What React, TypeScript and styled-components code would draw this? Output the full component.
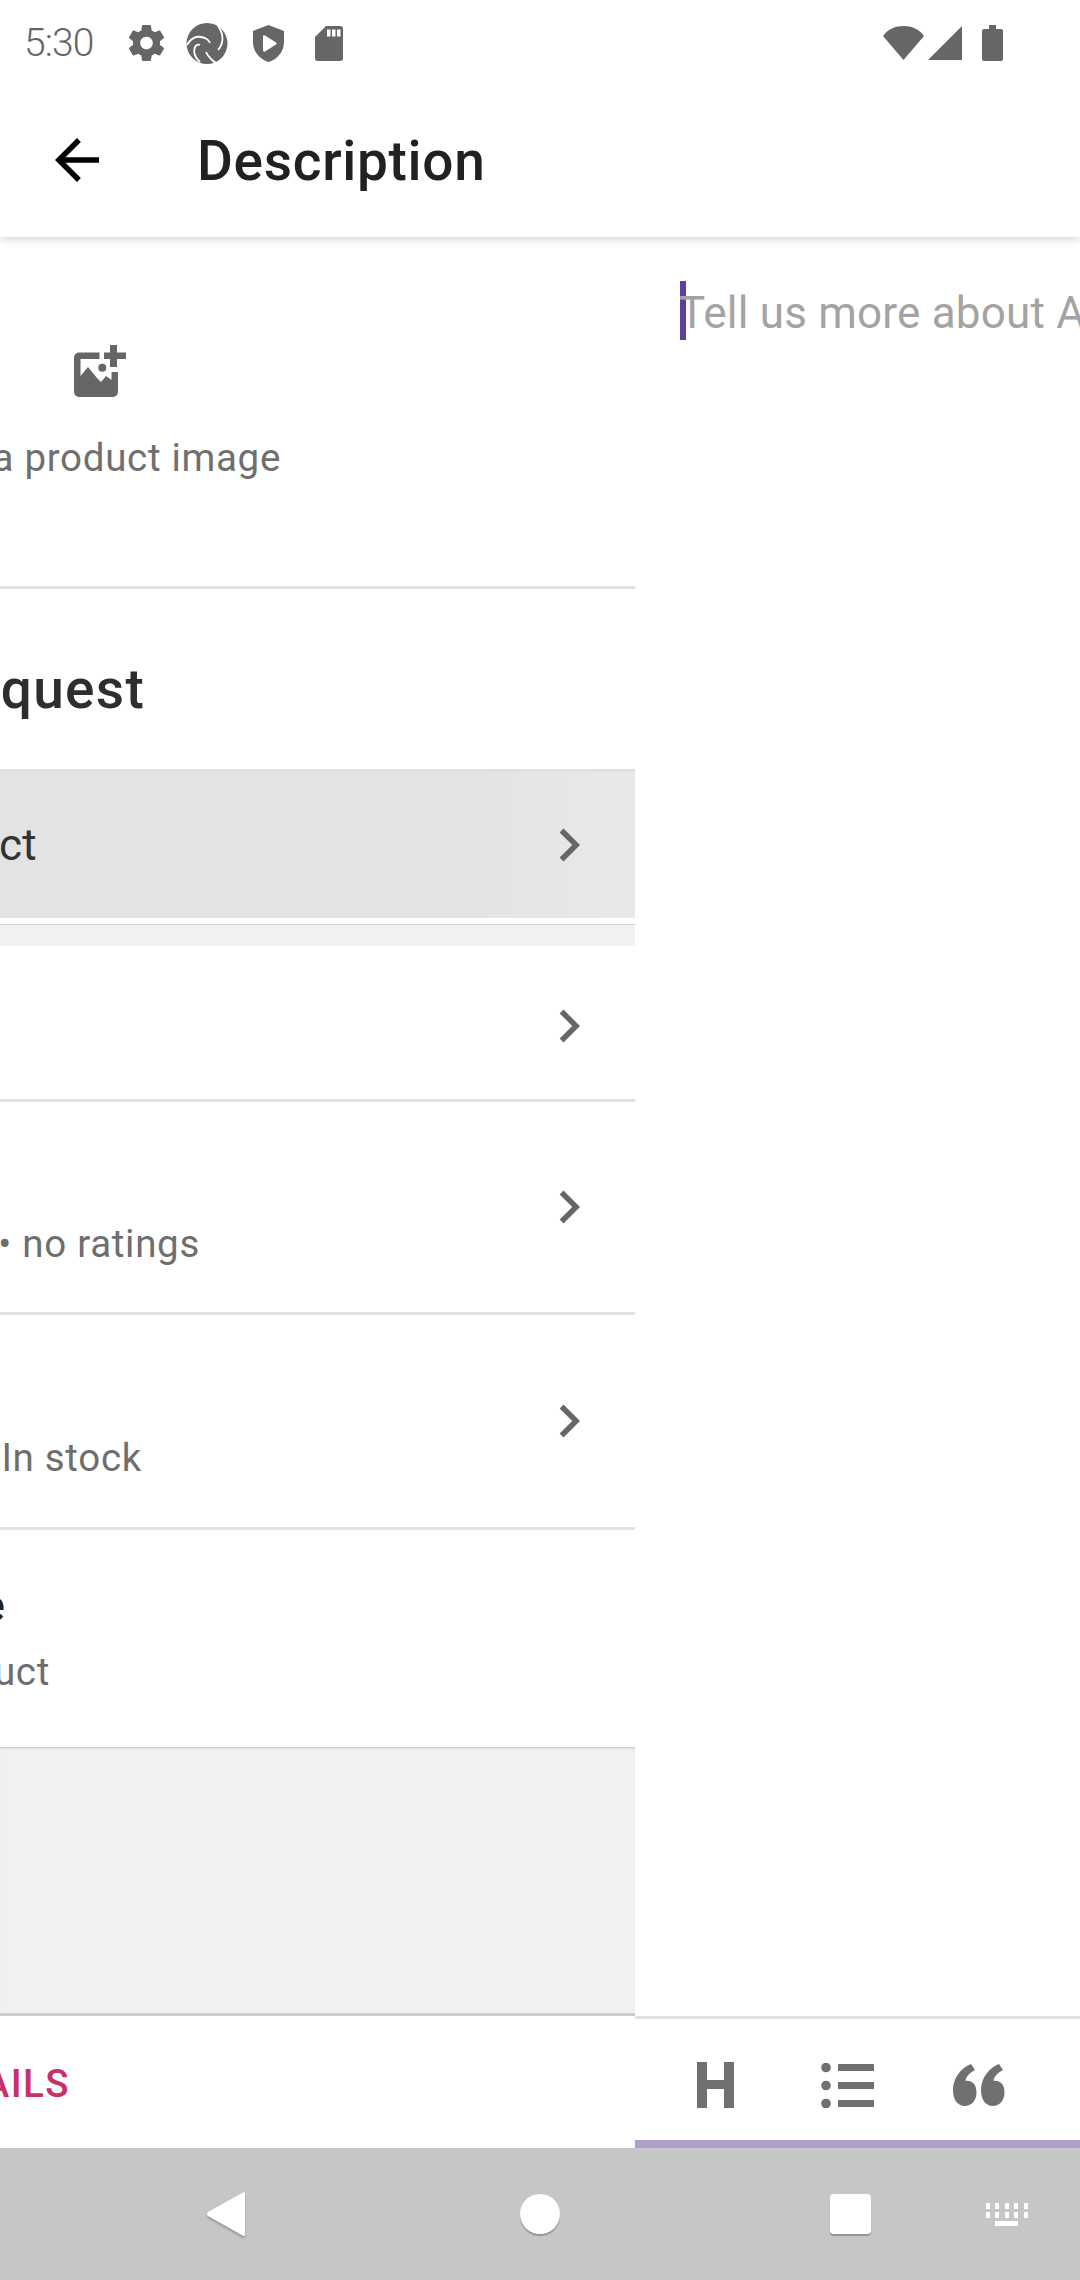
import React from "react";
import styled, { createGlobalStyle } from "styled-components";

const GlobalStyle = createGlobalStyle`
  html, body {
    margin: 0;
    padding: 0;
    background: #ffffff;
    font-family: Roboto, "Noto Sans", sans-serif;
  }
  * {
    box-sizing: border-box;
  }
`;

const Screen = styled.div`
  width: 1080px;
  height: 2280px;
  display: flex;
  flex-direction: column;
  overflow: hidden;
  background: #ffffff;
`;

////////status bar
const StatusBar = styled.div`
  height: 83px;
  flex: none;
  padding: 3px 77px 0 24px;
  display: flex;
  align-items: center;
  color: #666666;
`;
const Time = styled.span`
  width: 105px;
  flex: none;
  font-size: 39px;
  font-weight: 300;
  letter-spacing: -0.9px;
`;
const StatusIcon = styled.svg<{ $left?: number }>`
  display: block;
  flex: none;
  margin-left: ${(p) => p.$left ?? 0}px;
  fill: #666666;
`;
const Spacer = styled.div`
  flex: 1;
`;

////////toolbar
const Toolbar = styled.header`
  height: 154px;
  flex: none;
  display: flex;
  align-items: center;
  padding-left: 44px;
  background: #ffffff;
  position: relative;
  z-index: 2;
  box-shadow: 0 2px 8px rgba(0, 0, 0, 0.18);
  clip-path: inset(0 0 -20px 0);
`;
const BackIcon = styled.svg`
  width: 66px;
  height: 66px;
  fill: #000000;
  flex: none;
`;
const Title = styled.h1`
  margin: 2px 0 0 87px;
  font-size: 55px;
  font-weight: 500;
  letter-spacing: 0.69px;
  color: #212121;
`;

const Split = styled.main`
  flex: 1;
  min-height: 0;
  display: flex;
`;

////////left screen, half way out of the window
const LeftPane = styled.section`
  width: 635px;
  flex: none;
  display: flex;
  flex-direction: column;
  overflow: hidden;
  background: #f1f1f1;
`;
// text fragments keep their right edge where the sliding screen left them
const Clipped = styled.div<{ $end: number }>`
  width: ${(p) => p.$end}px;
  display: flex;
  justify-content: flex-end;
  white-space: nowrap;
`;
const ImageBoxWrap = styled.div`
  flex: none;
  background: #ffffff;
  border-bottom: 3px solid #e1e1e1;
`;
const ImageBox = styled.div`
  height: 349px;
  padding-top: 102px;
`;
const AddImageIcon = styled.svg`
  display: block;
  width: 66px;
  height: 66px;
  margin-left: 65px;
  fill: #666666;
`;
const AddImageText = styled(Clipped)`
  margin-top: 28px;
  font-size: 38.5px;
  line-height: 50px;
  letter-spacing: 0.69px;
  color: #6f6f6f;
`;
const Header = styled.div`
  height: 183px;
  flex: none;
  padding-top: 68px;
  background: #ffffff;
  border-bottom: 3px solid #e1e1e1;
`;
const HeaderText = styled(Clipped)`
  font-size: 55px;
  line-height: 64px;
  font-weight: 500;
  letter-spacing: 1.3px;
  color: #2e2e2e;
`;
const Row = styled.div<{ $height: number; $pressed?: boolean; $line?: boolean; $top?: number }>`
  height: ${(p) => p.$height}px;
  flex: none;
  display: flex;
  align-items: center;
  justify-content: space-between;
  padding-right: 33px;
  padding-top: ${(p) => p.$top ?? 0}px;
  background: ${(p) =>
    p.$pressed
      ? "linear-gradient(90deg, #e3e3e3 0%, #e3e3e3 70%, #e9e9e9 100%)"
      : "#ffffff"};
  border-bottom: ${(p) => (p.$line ? "3px solid #e1e1e1" : "none")};
`;
const RowText = styled.div<{ $top: number }>`
  align-self: flex-start;
  padding-top: ${(p) => p.$top}px;
`;
const RowTitle = styled(Clipped)`
  font-size: 44px;
  line-height: 60px;
  letter-spacing: 0.3px;
  color: #333333;
`;
const RowTitleStrong = styled(RowTitle)`
  font-weight: 500;
  color: #212121;
`;
const RowSub = styled(Clipped)`
  font-size: 38.5px;
  line-height: 62px;
  letter-spacing: 0.7px;
  color: #6e6e6e;
`;
const RowSubLow = styled(RowSub)`
  margin-top: 5px;
`;
const ChevronIcon = styled.svg`
  width: 66px;
  height: 66px;
  fill: #666666;
  flex: none;
  margin-left: auto;
`;
const Gap = styled.div`
  height: 22px;
  flex: none;
  background: #f1f1f1;
  border-top: 1px solid #cfcfcf;
`;
const WhiteStrip = styled.div`
  height: 6px;
  flex: none;
  background: #ffffff;
`;
const Filler = styled.div`
  flex: 1;
  box-shadow: inset 0 3px 3px -2px rgba(0, 0, 0, 0.2);
`;
const Footer = styled.div`
  height: 135px;
  flex: none;
  padding-top: 42px;
  background: #ffffff;
  border-top: 3px solid #cccccc;
`;
const FooterAction = styled(Clipped)`
  font-size: 38.5px;
  line-height: 52px;
  font-weight: 500;
  letter-spacing: 1.4px;
  color: #c8306b;
`;

////////right screen, the editor
const RightPane = styled.section`
  flex: 1;
  min-width: 0;
  display: flex;
  flex-direction: column;
  background: #ffffff;
`;
const Editor = styled.div`
  flex: 1;
  padding: 44px 0 0 45px;
  display: flex;
  align-items: flex-start;
  overflow: hidden;
`;
const Cursor = styled.div`
  width: 6px;
  height: 59px;
  flex: none;
  background: #5e3f95;
`;
const Placeholder = styled.div`
  font-size: 44px;
  line-height: 59px;
  margin: 3px 0 0 -7px;
  letter-spacing: 0.2px;
  color: #a3a3a3;
  white-space: nowrap;
`;
const FormatBar = styled.div`
  height: 132px;
  flex: none;
  display: flex;
  align-items: center;
  padding-left: 14px;
  border-top: 3px solid #e1e1e1;
  border-bottom: 8px solid #af9fcb;
`;
const FormatButton = styled.button`
  width: 132px;
  height: 100%;
  padding: 11px 0 0;
  border: none;
  background: transparent;
  display: flex;
  align-items: center;
  justify-content: center;
`;
const FormatIcon = styled.svg`
  display: block;
  fill: #707070;
`;

////////android nav bar
const NavBar = styled.nav`
  height: 132px;
  flex: none;
  display: flex;
  align-items: center;
  padding-left: 207px;
  background: #c6c6c6;
`;
const NavBack = styled.svg`
  width: 38px;
  height: 46px;
  flex: none;
  fill: #ffffff;
  filter: drop-shadow(0 2px 1px rgba(0, 0, 0, 0.25));
`;
const NavHome = styled.div`
  width: 40px;
  height: 40px;
  flex: none;
  margin-left: 275px;
  border-radius: 50%;
  background: #ffffff;
  box-shadow: 0 2px 1px rgba(0, 0, 0, 0.25);
`;
const NavRecent = styled.div`
  width: 41px;
  height: 40px;
  flex: none;
  margin-left: 270px;
  border-radius: 4px;
  background: #ffffff;
  box-shadow: 0 2px 1px rgba(0, 0, 0, 0.25);
`;
const NavKeyboard = styled.svg`
  width: 42px;
  height: 23px;
  flex: none;
  margin-left: 115px;
  fill: #ffffff;
`;

const CHEVRON = "M10 6 8.59 7.41 13.17 12l-4.58 4.59L10 18l6-6z";

const Chevron = () => (
  <ChevronIcon viewBox="0 0 24 24">
    <path d={CHEVRON} />
  </ChevronIcon>
);

const App = () => {
  return (
    <Screen>
      <GlobalStyle />
      <StatusBar>
        <Time>5:30</Time>
        <StatusIcon width="35" height="36" viewBox="2.4 2 19.2 20">
          <path d="M19.43 12.98c.04-.32.07-.64.07-.98s-.03-.66-.07-.98l2.11-1.65c.19-.15.24-.42.12-.64l-2-3.46c-.12-.22-.39-.3-.61-.22l-2.49 1c-.52-.4-1.08-.73-1.69-.98l-.38-2.65C14.46 2.18 14.25 2 14 2h-4c-.25 0-.46.18-.49.42l-.38 2.65c-.61.25-1.17.59-1.69.98l-2.49-1c-.23-.09-.49 0-.61.22l-2 3.46c-.13.22-.07.49.12.64l2.11 1.65c-.04.32-.07.65-.07.98s.03.66.07.98l-2.11 1.65c-.19.15-.24.42-.12.64l2 3.46c.12.22.39.3.61.22l2.49-1c.52.4 1.08.73 1.69.98l.38 2.65c.03.24.24.42.49.42h4c.25 0 .46-.18.49-.42l.38-2.65c.61-.25 1.17-.59 1.69-.98l2.49 1c.23.09.49 0 .61-.22l2-3.46c.12-.22.07-.49-.12-.64l-2.11-1.65zM12 15.5c-1.93 0-3.5-1.57-3.5-3.5s1.57-3.5 3.5-3.5 3.5 1.57 3.5 3.5-1.57 3.5-3.5 3.5z" />
        </StatusIcon>
        <StatusIcon $left={22} width="42" height="41" viewBox="0 0 42 41">
          <circle cx="21" cy="20.5" r="20.5" />
          <path
            d="M32 3c6 8 6 17 0 24M1 22c4-7 9-9 14-8 4 .5 8 3 9 6M14 39c-5-4-7-10-5-15 1-2 3-3 5-2M20 29c2 5 8 11 16 14"
            fill="none"
            stroke="#ffffff"
            strokeWidth="1.8"
          />
        </StatusIcon>
        <StatusIcon $left={25} width="31" height="37" viewBox="0 0 31 37">
          <path d="M15.5 0 31 6v11c0 9-6 17-15.5 20C6 34 0 26 0 17V6z" />
          <path d="M10 11.500c0-1 1-1.500 2-1l11 7c.8.5.8 1.500 0 2l-11 7c-1 .5-2 0-2-1z" fill="#ffffff" />
        </StatusIcon>
        <StatusIcon $left={31} width="28" height="35" viewBox="0 0 28 35">
          <path d="M11 0h14a3 3 0 0 1 3 3v29a3 3 0 0 1-3 3H3a3 3 0 0 1-3-3V11z" />
          <path d="M12 3.500h3.500v7H12zM17 3.500h3.500v7H17zM22 3.500h3.500v7H22z" fill="#ffffff" />
        </StatusIcon>
        <Spacer />
        <StatusIcon width="41" height="34" viewBox="0 0 41 34">
          <path d="M0 10C5 3 12 0 20.500 0S36 3 41 10L20.500 34z" />
        </StatusIcon>
        <StatusIcon $left={4} width="34" height="34" viewBox="0 0 34 34">
          <path d="M34 0v34H0z" />
        </StatusIcon>
        <StatusIcon $left={20} width="21" height="36" viewBox="0 0 21 36">
          <path d="M7 0h7v4h5a2 2 0 0 1 2 2v28a2 2 0 0 1-2 2H2a2 2 0 0 1-2-2V6a2 2 0 0 1 2-2h5z" />
        </StatusIcon>
      </StatusBar>

      <Toolbar>
        <BackIcon viewBox="0 0 24 24">
          <path d="M20 11H7.830l5.590-5.590L12 4l-8 8 8 8 1.410-1.410L7.830 13H20v-2z" />
        </BackIcon>
        <Title>Description</Title>
      </Toolbar>

      <Split>
        <LeftPane>
          <ImageBoxWrap>
            <ImageBox>
              <AddImageIcon viewBox="5 4 66 66">
                <path d="M19 17.500h20.500V24H20.500v17L28 32l9 11 4 4 5-6 5.500 4v-8H58v20a5 5 0 0 1-5 5H19a5 5 0 0 1-5-5V22.500a5 5 0 0 1 5-5z" />
                <circle cx="42.300" cy="32.700" r="4" />
                <path d="M50 10h7v7.500h9V24h-9v8h-7v-8h-6v-6.500h6z" />
              </AddImageIcon>
              <AddImageText $end={281}>a product image</AddImageText>
            </ImageBox>
          </ImageBoxWrap>

          <Header>
            <HeaderText $end={145}>quest</HeaderText>
          </Header>

          <Row $height={146} $pressed>
            <RowTitle $end={37}>ct</RowTitle>
            <Chevron />
          </Row>
          <WhiteStrip />
          <Gap />

          <Row $height={156} $line $top={6}>
            <Chevron />
          </Row>
          <Row $height={213} $line>
            <RowText $top={111}>
              <RowSub $end={200}>• no ratings</RowSub>
            </RowText>
            <Chevron />
          </Row>
          <Row $height={215} $line>
            <RowText $top={112}>
              <RowSub $end={142}>In stock</RowSub>
            </RowText>
            <Chevron />
          </Row>
          <Row $height={217}>
            <RowText $top={46}>
              <RowTitleStrong $end={5}>e</RowTitleStrong>
              <RowSubLow $end={50}>uct</RowSubLow>
            </RowText>
          </Row>

          <Filler />

          <Footer>
            <FooterAction $end={70}>AILS</FooterAction>
          </Footer>
        </LeftPane>

        <RightPane>
          <Editor>
            <Cursor />
            <Placeholder>Tell us more about A</Placeholder>
          </Editor>
          <FormatBar>
            <FormatButton>
              <FormatIcon width="37" height="46" viewBox="0 0 37 46">
                <path d="M0 0h10v18h17V0h10v46H27V27H10v19H0z" />
              </FormatIcon>
            </FormatButton>
            <FormatButton>
              <FormatIcon width="53" height="45" viewBox="0 0 53 45">
                <circle cx="5" cy="4.500" r="4.800" />
                <circle cx="5" cy="22.500" r="4.800" />
                <circle cx="5" cy="40.500" r="4.800" />
                <path d="M17 1h36v7H17zM17 19h36v7H17zM17 37h36v7H17z" />
              </FormatIcon>
            </FormatButton>
            <FormatButton>
              <FormatIcon width="52" height="42" viewBox="0 0 52 42">
                <path d="M18 0l4 6C16 9 13 13 12.500 17c6-1 11 3 11 11.500C23.500 37 18 42 12 42 4 42 0 35 0 26 0 14 8 4 18 0z" />
                <path d="M46 0l4 6C44 9 41 13 40.500 17c6-1 11 3 11 11.500C51.500 37 46 42 40 42 32 42 28 35 28 26 28 14 36 4 46 0z" />
              </FormatIcon>
            </FormatButton>
          </FormatBar>
        </RightPane>
      </Split>

      <NavBar>
        <NavBack viewBox="0 0 38 46">
          <path d="M36 1.500a1.200 1.200 0 0 1 2 .8V44a1.200 1.200 0 0 1-2 .8L1 25a3 3 0 0 1 0-4z" />
        </NavBack>
        <NavHome />
        <NavRecent />
        <NavKeyboard viewBox="0 0 42 23">
          <path d="M0 0h4v6H0zM9 0h4v6H9zM19 0h4v6h-4zM28 0h4v6h-4zM38 0h4v6h-4zM0 9h4v6H0zM9 9h4v6H9zM19 9h4v6h-4zM28 9h4v6h-4zM38 9h4v6h-4zM9 18h23v5H9z" />
        </NavKeyboard>
      </NavBar>
    </Screen>
  );
};

export default App;
